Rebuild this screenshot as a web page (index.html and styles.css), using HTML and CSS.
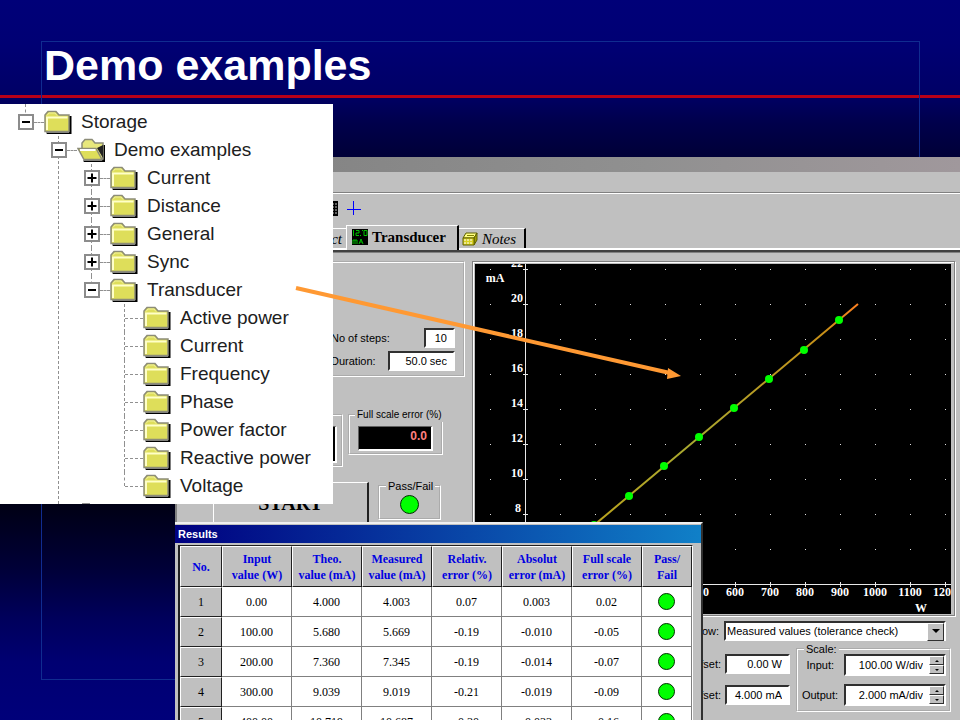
FILE: index.html
```
<!DOCTYPE html>
<html lang="en">
<head>
<meta charset="utf-8">
<title>Demo examples</title>
<link rel="stylesheet" href="styles.css">
</head>
<body>
<svg class="defs" aria-hidden="true">
  <symbol id="folder" viewBox="0 0 28 24">
    <path d="M2 22.500H25V6H27.500V24H3z" fill="#000"/>
    <path d="M1 21.500V5L4 1.500H12L15 5H25V21.500z" fill="#dede5a" stroke="#8c8c78" stroke-width="1.500"/>
    <path d="M3 20V7.500H23.500" fill="none" stroke="#ffffc8" stroke-width="2"/>
    <path d="M3 5.500L5 3H11L13 5.500" fill="none" stroke="#f0f0a0" stroke-width="1"/>
  </symbol>
  <symbol id="folder-open" viewBox="0 0 28 24">
    <path d="M6 22.500H25V7H28V24H7z" fill="#000"/>
    <path d="M5 12V5L8 1.500H15L18 5H26V21H8z" fill="#e8e87c" stroke="#8c8c78" stroke-width="1.500"/>
    <path d="M20 10L26 20V7z" fill="#222"/>
    <path d="M1 10.500H19L25 21.500H7z" fill="#dede5a" stroke="#8c8c78" stroke-width="1.500"/>
    <path d="M3 12H18.500" stroke="#fff" stroke-width="2"/>
  </symbol>
  <symbol id="minus" viewBox="0 0 16 16"><path d="M4 8H12" stroke="#000" stroke-width="2"/></symbol>
  <symbol id="plus" viewBox="0 0 16 16"><path d="M3.500 8H12.500M8 3.500V12.500" stroke="#000" stroke-width="2"/></symbol>
</svg>

<main class="slide">
  <div class="frame"></div>
  <header class="slide-head"><h1>Demo examples</h1></header>

  <section class="app">
    <div class="app-title"></div>
    <div class="app-menu"></div>
    <div class="toolbar">
      <svg width="14" height="15" viewBox="0 0 14 15"><path d="M0 0H14V15H0z" fill="#000"/><path d="M2 3H13M2 6H13M2 9H13M2 12H13" stroke="#c0c0c0" stroke-dasharray="2 1"/></svg>
      <svg width="15" height="15" viewBox="0 0 15 15"><path d="M6 0H7V14H6zM0 8H14V9H0z" fill="#0000ff"/></svg>
    </div>
    <nav class="tabs">
      <a class="tab" href="#object">Test Object</a>
      <a class="tab active" href="#transducer">
        <svg width="16" height="16" viewBox="0 0 16 16"><path d="M0 0H16V16H0z"/><path d="M1.500 1V7M4 1.500H7V4H4V6.500H7M8 6.500H9M10 1.500H11M12 1.500H15V6.500H12zM1 15V11H5V15M3 11V15M7 15L9 10L11 15M8 13H10" fill="none" stroke="#00c000"/></svg>
        Transducer</a>
      <a class="tab" href="#notes">
        <svg width="16" height="14" viewBox="0 0 16 14"><path d="M1 6L4 1H15L12 6z" fill="#ffff80" stroke="#606000"/><path d="M12 6L15 1V8L12 13z" fill="#a0a000" stroke="#606000"/><path d="M1 6H12V13H1z" fill="#d8d020" stroke="#606000"/><path d="M2 8H11M2 11H11" stroke="#fff" stroke-dasharray="2 1"/><path d="M5 3.500H12" stroke="#808000"/></svg>
        Notes</a>
    </nav>
    <div class="app-body">
      <div class="left">
        <div class="steps">
          <div class="field"><label for="steps">No of steps:</label><input id="steps" class="short" value="10"></div>
          <div class="field"><label for="duration">Duration:</label><input id="duration" class="long" value="50.0 sec"></div>
        </div>
        <div class="errors">
          <div class="group first"><div class="display tall"></div></div>
          <fieldset class="group full"><legend>Full scale error (%)</legend><output class="display">0.0</output></fieldset>
        </div>
        <div class="run">
          <button class="start" type="button">START</button>
          <fieldset class="group verdict"><legend>Pass/Fail</legend><span class="lamp"></span></fieldset>
        </div>
      </div>
      <div class="right">
        <div class="chart">
          <svg class="plot">
            <defs>
              <pattern id="dots" x="15" y="5" width="35" height="35" patternUnits="userSpaceOnUse"><path d="M0 0H1V1H0z" fill="#e0e0e0"/></pattern>
              <linearGradient id="trace" x1="0" y1="1" x2="1" y2="0"><stop offset="0" stop-color="#c8a010"/><stop offset=".5" stop-color="#a8a830"/><stop offset=".9" stop-color="#c89018"/><stop offset="1" stop-color="#ff8020"/></linearGradient>
            </defs>
            <rect width="100%" height="318" fill="url(#dots)"/>
            <path class="axis" d="M50.500 0V320M0 320.500H2000"/>
            <path class="axis" d="M48 5.500H53M48 40.500H53M48 75.500H53M48 110.500H53M48 145.500H53M48 180.500H53M48 215.500H53M48 250.500H53M260.500 318V323M295.500 318V323M330.500 318V323M365.500 318V323M400.500 318V323M435.500 318V323M470.500 318V323"/>
            <path d="M50 319L383 40" stroke="url(#trace)" stroke-width="2" fill="none"/>
            <g fill="#00ff00"><circle cx="119" cy="261" r="4"/><circle cx="154" cy="232" r="4"/><circle cx="189" cy="202" r="4"/><circle cx="224" cy="173" r="4"/><circle cx="259" cy="144" r="4"/><circle cx="294" cy="115" r="4"/><circle cx="329" cy="86" r="4"/><circle cx="364" cy="56" r="4"/></g>
            <g class="y-labels"><text x="48" y="3">22</text><text x="48" y="38">20</text><text x="48" y="73">18</text><text x="48" y="108">16</text><text x="48" y="143">14</text><text x="48" y="178">12</text><text x="48" y="213">10</text><text x="46" y="248">8</text></g>
            <g class="x-labels"><text x="225" y="332">500</text><text x="260" y="332">600</text><text x="295" y="332">700</text><text x="330" y="332">800</text><text x="365" y="332">900</text><text x="400" y="332">1000</text><text x="435" y="332">1100</text><text x="470" y="332">1200</text><text x="446" y="348">W</text><text x="20" y="18">mA</text></g>
          </svg>
        </div>
        <div class="show">
          <label for="show">Show:</label>
          <span class="combo"><select id="show"><option>Measured values (tolerance check)</option></select></span>
        </div>
        <div class="axes">
          <div class="offsets">
            <div class="field"><label for="off-in">Offset:</label><input id="off-in" value="0.00 W"></div>
            <div class="field"><label for="off-out">Offset:</label><input id="off-out" value="4.000 mA"></div>
          </div>
          <fieldset class="group scale">
            <legend>Scale:</legend>
            <div class="field"><label for="sc-in">Input:</label><span class="spin"><input id="sc-in" value="100.00 W/div"><span class="spin-buttons"><button type="button" aria-label="Input up"></button><button type="button" aria-label="Input down" class="down"></button></span></span></div>
            <div class="field"><label for="sc-out">Output:</label><span class="spin"><input id="sc-out" value="2.000 mA/div"><span class="spin-buttons"><button type="button" aria-label="Output up"></button><button type="button" aria-label="Output down" class="down"></button></span></span></div>
          </fieldset>
        </div>
      </div>
    </div>
  </section>

  <section class="results">
    <h2>Results</h2>
    <div class="sheet">
    <table>
      <colgroup><col class="c-no"><col><col><col><col><col><col><col class="c-pass"></colgroup>
      <thead><tr><th>No.</th><th>Input<br>value (W)</th><th>Theo.<br>value (mA)</th><th>Measured<br>value (mA)</th><th>Relativ.<br>error (%)</th><th>Absolut<br>error (mA)</th><th>Full scale<br>error (%)</th><th>Pass/<br>Fail</th></tr></thead>
      <tbody>
        <tr><th>1</th><td>0.00</td><td>4.000</td><td>4.003</td><td>0.07</td><td>0.003</td><td>0.02</td><td><span class="lamp small"></span></td></tr>
        <tr><th>2</th><td>100.00</td><td>5.680</td><td>5.669</td><td>-0.19</td><td>-0.010</td><td>-0.05</td><td><span class="lamp small"></span></td></tr>
        <tr><th>3</th><td>200.00</td><td>7.360</td><td>7.345</td><td>-0.19</td><td>-0.014</td><td>-0.07</td><td><span class="lamp small"></span></td></tr>
        <tr><th>4</th><td>300.00</td><td>9.039</td><td>9.019</td><td>-0.21</td><td>-0.019</td><td>-0.09</td><td><span class="lamp small"></span></td></tr>
        <tr><th>5</th><td>400.00</td><td>10.719</td><td>10.687</td><td>-0.30</td><td>-0.033</td><td>-0.16</td><td><span class="lamp small"></span></td></tr>
      </tbody>
    </table>
    </div>
  </section>

  <section class="tree">
    <ul>
      <li class="root"><div class="row"><button type="button" aria-label="Collapse"><svg><use href="#minus"/></svg></button><i></i><svg class="icon"><use href="#folder"/></svg><span>Storage</span></div>
        <ul>
          <li class="more"><div class="row"><button type="button" aria-label="Collapse"><svg><use href="#minus"/></svg></button><i></i><svg class="icon"><use href="#folder-open"/></svg><span>Demo examples</span></div>
            <ul>
              <li><div class="row"><button type="button" aria-label="Expand"><svg><use href="#plus"/></svg></button><i></i><svg class="icon"><use href="#folder"/></svg><span>Current</span></div></li>
              <li><div class="row"><button type="button" aria-label="Expand"><svg><use href="#plus"/></svg></button><i></i><svg class="icon"><use href="#folder"/></svg><span>Distance</span></div></li>
              <li><div class="row"><button type="button" aria-label="Expand"><svg><use href="#plus"/></svg></button><i></i><svg class="icon"><use href="#folder"/></svg><span>General</span></div></li>
              <li><div class="row"><button type="button" aria-label="Expand"><svg><use href="#plus"/></svg></button><i></i><svg class="icon"><use href="#folder"/></svg><span>Sync</span></div></li>
              <li><div class="row"><button type="button" aria-label="Collapse"><svg><use href="#minus"/></svg></button><i></i><svg class="icon"><use href="#folder"/></svg><span>Transducer</span></div>
                <ul class="leaves">
                  <li><div class="row"><i></i><svg class="icon"><use href="#folder"/></svg><span>Active power</span></div></li>
                  <li><div class="row"><i></i><svg class="icon"><use href="#folder"/></svg><span>Current</span></div></li>
                  <li><div class="row"><i></i><svg class="icon"><use href="#folder"/></svg><span>Frequency</span></div></li>
                  <li><div class="row"><i></i><svg class="icon"><use href="#folder"/></svg><span>Phase</span></div></li>
                  <li><div class="row"><i></i><svg class="icon"><use href="#folder"/></svg><span>Power factor</span></div></li>
                  <li><div class="row"><i></i><svg class="icon"><use href="#folder"/></svg><span>Reactive power</span></div></li>
                  <li><div class="row"><i></i><svg class="icon"><use href="#folder"/></svg><span>Voltage</span></div></li>
                </ul>
              </li>
            </ul>
          </li>
        </ul>
      </li>
    </ul>
  </section>

  <svg class="arrow" viewBox="0 0 390 96" width="390" height="96"><path d="M1 5L375 90" stroke="#ff9933" stroke-width="4" fill="none"/><path d="M373 85L386 93L372 96z" fill="#ff9933"/></svg>
</main>
</body>
</html>
```
FILE: styles.css
```
* { box-sizing: border-box; }
body { margin: 0; font: 11px/14px "Liberation Sans", Arial, sans-serif; color: #000; }
ul { list-style: none; margin: 0; padding: 0; }
button, input, select { font: inherit; color: inherit; margin: 0; padding: 0; border-radius: 0; }
.defs { position: absolute; width: 0; height: 0; }

.slide {
  position: relative;
  height: 100vh;
  overflow: hidden;
  background: linear-gradient(#000078, #000074 6%, #000066 13%, #00004c 17%, #000036 22%, #000010 32%, #00000c 66%, #000018 71%, #000038 79%, #00005c 86%, #000072 92%, #00007a);
}
.frame { position: absolute; inset: 41px 40px 40px 41px; border: 1px solid #102c90; }
.slide-head { border-bottom: 3px solid #b80018; height: 98px; padding: 40px 44px 0; }
h1 { position: relative; margin: 0; color: #fff; font-size: 43px; line-height: 50px; font-weight: bold; }

/* application window */
.app { position: absolute; inset: 157px 0 0 175px; display: flex; flex-direction: column; background: #c0c0c0; }
.app-title { flex: none; height: 15px; background: linear-gradient(90deg, #808080, #909090 60%, #a0989c); }
.app-menu { flex: none; height: 21px; border-bottom: 1px solid #808080; }
.toolbar { flex: none; height: 32px; border-top: 1px solid #fff; display: flex; gap: 9px; padding: 7px 0 0 149px; }
.tabs { flex: none; display: flex; align-items: flex-end; height: 25px; padding-left: 76px; border-bottom: 2px solid #fff; font: italic 15px/16px "Liberation Serif", serif; }
.tab { display: flex; align-items: center; gap: 4px; height: 20px; padding: 0 8px 0 3px; color: #000; text-decoration: none; border: 1px solid #fff; border-width: 1px 2px 0 0; border-right-color: #000; }
.tab:first-child { width: 95px; justify-content: flex-end; padding: 0 4px 0 0; border-right: 0; }
.tab.active { height: 25px; margin-bottom: -2px; padding: 0 11px 2px 5px; background: #c0c0c0; border-left: 1px solid #fff; font-style: normal; font-weight: bold; }
.app-body { flex: 1; display: flex; border-top: 2px solid #404040; box-shadow: inset 0 1px #808080; padding: 9px 5px 0 0; }
.left { flex: none; width: 297px; border-left: 2px solid #808080; }
.right { flex: 1; min-width: 0; }

.steps { height: 116px; width: 288px; border: 2px groove #fff; border-left: 0; padding-right: 8px; padding-bottom: 4px; display: flex; flex-direction: column; justify-content: flex-end; align-items: flex-end; gap: 3px; }
.steps .field { width: 124px; justify-content: space-between; }
.field { display: flex; align-items: center; }
input { height: 20px; min-width: 0; text-align: right; background: #fff; border: 2px solid; border-color: #303030 #fff #fff #303030; outline: 0; padding-right: 6px; }
.short { width: 31px; }
.long { width: 67px; }

.group { margin: 0; min-width: 0; border: 2px groove #fff; padding: 0; }
legend { padding: 0 2px; margin-left: 6px; line-height: 14px; background: #c0c0c0; white-space: nowrap; }
.errors { display: flex; justify-content: flex-start; align-items: flex-start; gap: 5px; margin-top: 31px; }
.first { width: 166px; height: 53px; margin-top: 6px; padding: 10px 4px 0 8px; }
.full { width: 95px; height: 47px; padding: 4px 8px 0; }
.full legend { margin-left: -3px; font-size: 10px; }
.display { display: block; height: 25px; background: #000; border: 1px solid #606060; border-color: #606060 #fff #fff #606060; border-width: 1px 2px 2px 1px; padding-right: 4px; color: #ff8080; font: bold 12px/19px "Liberation Sans", Arial, sans-serif; text-align: right; }
.tall { height: 37px; }
.run { display: flex; align-items: flex-start; padding-left: 36px; gap: 9px; margin-top: 11px; }
.start { width: 156px; height: 42px; margin-top: 4px; background: #c0c0c0; border: 1px solid #fff; border-right: 2px solid #202020; border-bottom-color: #202020; font: bold 20px/24px "Liberation Serif", serif; }
.verdict { width: 63px; height: 41px; margin-top: 1px; }
.lamp { display: block; width: 19px; height: 19px; margin: 2px auto 0; border: 1px solid #003000; border-radius: 50%; background: #00ff00; }
.lamp.small { width: 17px; height: 17px; margin-top: 0; }

.chart { border: 1px solid #808080; box-shadow: 1px 1px #fff, inset 1px 1px #fff; padding: 2px 3px 1px 2px; }
.plot { display: block; width: 100%; height: 350px; background: #000; fill: #fff; font: bold 12px "Liberation Serif", serif; }
.axis { stroke: #e8e8e8; fill: none; }
.y-labels { text-anchor: end; }
.x-labels { text-anchor: middle; }

.show { display: flex; justify-content: flex-end; align-items: center; gap: 5px; margin-top: 5px; padding-right: 9px; }
.combo { position: relative; width: 222px; height: 20px; }
.combo select { width: 100%; height: 100%; appearance: none; background: #fff; border: 2px solid; border-color: #303030 #fff #fff #303030; padding-left: 1px; }
.combo::before { content: ""; position: absolute; top: 2px; right: 2px; width: 15px; height: 16px; background: #c0c0c0; border: 1px solid; border-color: #fff #303030 #303030 #fff; pointer-events: none; }
.combo::after { content: ""; position: absolute; top: 8px; right: 6px; border: 4px solid transparent; border-top-color: #000; border-bottom: 0; pointer-events: none; }
.axes { display: flex; justify-content: flex-end; align-items: flex-start; gap: 6px; padding-right: 4px; margin-top: 1px; }
.offsets { display: flex; flex-direction: column; gap: 11px; margin-top: 12px; }
.offsets .field { gap: 4px; }
.offsets input { width: 65px; }
.scale { width: 155px; height: 70px; padding: 0 3px; }
.scale legend { margin-left: 3px; }
.scale .field { justify-content: flex-end; gap: 10px; margin-bottom: 8px; }
.scale .field + .field { gap: 6px; }
.scale legend + .field { margin-top: -2px; }
.spin { display: flex; width: 102px; height: 22px; background: #fff; border: 2px solid; border-color: #303030 #fff #fff #303030; }
.spin input { flex: 1; height: 18px; border: 0; padding-right: 6px; }
.spin-buttons { display: flex; flex-direction: column; width: 15px; }
.spin-buttons button { flex: 1; display: flex; align-items: center; justify-content: center; background: #c0c0c0; border: 1px solid; border-color: #fff #303030 #303030 #fff; }
.spin-buttons button::before { content: ""; border: 2px solid transparent; border-top: 0; border-bottom-color: #000; }
.spin-buttons .down::before { border-top: 2px solid #000; border-bottom: 0; }

/* results window */
.results { position: absolute; left: 175px; top: 522px; bottom: 0; width: 528px; overflow: hidden; background: #c0c0c0; border-top: 2px solid #f0f0f0; border-right: 2px solid #303030; }
h2 { margin: 1px 0 0; height: 18px; padding-left: 3px; background: linear-gradient(90deg, #000080, #1080c8); color: #fff; font-size: 11px; line-height: 18px; }
.sheet { width: 515px; margin: 2px 0 0 3px; border: 1px solid #202020; border-width: 1px 1px 0 2px; border-right-color: #fff; }
table { width: 100%; table-layout: fixed; border-collapse: separate; border-spacing: 0; font: 12px/16px "Liberation Serif", serif; text-align: center; background: #fff; }
col { width: 70px; }
.c-no { width: 42px; }
.c-pass { width: 50px; }
th, td { padding: 0; height: 30px; white-space: nowrap; }
th { background: #c0c0c0; border: 1px solid; border-color: #fff #202020 #202020 #fff; font-weight: normal; }
thead th { height: 41px; color: #0000e0; font-weight: bold; }
td { border: 1px solid #808080; border-width: 0 1px 1px 0; }

/* folder tree */
.tree { position: absolute; left: 0; top: 104px; width: 333px; padding: 4px 0 4px 18px; background: #fff; font-size: 19px; color: #202020; overflow: hidden; }
.tree::after { content: ""; position: absolute; left: 82px; bottom: 0; width: 8px; height: 1px; background: #909090; }
.tree li { position: relative; }
.tree li::before { content: ""; position: absolute; left: 7px; top: 0; height: 100%; border-left: 1px dashed #909090; }
.tree li:last-child::before { height: 14px; }
.tree li.root::before { top: -4px; }
.tree li.more::before { height: calc(100% + 4px); }
.tree ul ul { margin-left: 33px; }
.row { position: relative; display: flex; align-items: center; height: 28px; line-height: 28px; white-space: nowrap; }
.row button { width: 16px; height: 16px; flex: none; background: #fff; border: 2px solid #8c8c8c; display: flex; align-items: center; justify-content: center; }
.row button svg { width: 16px; height: 16px; flex: none; }
.row i { width: 10px; border-top: 1px dashed #909090; }
.leaves .row i { width: 18px; margin-left: 8px; }
.icon { width: 28px; height: 24px; flex: none; margin-right: 9px; }

.arrow { position: absolute; left: 295px; top: 283px; }
```
